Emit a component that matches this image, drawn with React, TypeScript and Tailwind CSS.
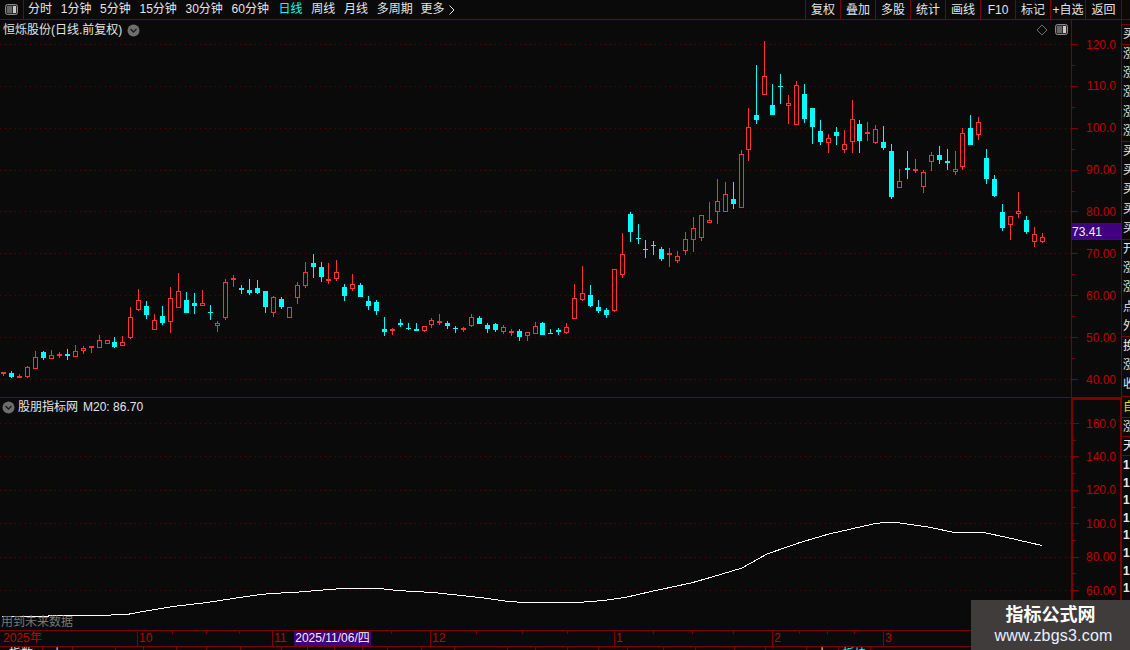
import React from "react";

type C = [number, number, number, number, number, "r" | "c"]; // x, hi, top, bot, lo, kind (zoom coords)
const block = (ox: number, oy: number, list: C[]) =>
  list.map(([x, hi, top, bot, lo, k]) => ({
    x: ox + Math.floor(x / 3),
    hi: oy + Math.round(hi / 3),
    top: oy + Math.round(top / 3),
    bot: oy + Math.round(bot / 3),
    lo: oy + Math.round(lo / 3),
    k,
  }));

const candles = [
  ...block(0, 250, [
    [9, 366, 366, 369, 378, "r"], [34, 363, 369, 381, 384, "c"], [57, 372, 378, 381, 381, "r"], [82, 348, 351, 381, 384, "r"],
    [106, 303, 321, 357, 357, "r"], [130, 303, 306, 324, 330, "c"], [154, 300, 316, 327, 327, "r"], [178, 306, 312, 318, 324, "r"],
    [202, 297, 312, 317, 330, "c"], [226, 285, 303, 321, 321, "r"], [250, 288, 294, 303, 312, "r"], [274, 288, 288, 294, 309, "r"],
    [298, 255, 270, 294, 294, "r"], [322, 270, 270, 282, 282, "r"], [344, 261, 276, 291, 294, "c"], [368, 258, 276, 288, 288, "r"],
    [392, 171, 201, 264, 267, "r"], [415, 117, 150, 180, 183, "r"], [439, 153, 168, 195, 207, "c"], [463, 192, 210, 240, 240, "r"],
    [487, 168, 198, 219, 225, "c"], [511, 111, 144, 216, 249, "r"], [535, 69, 123, 174, 174, "r"], [559, 126, 150, 189, 189, "c"],
    [583, 129, 159, 168, 192, "c"], [607, 120, 159, 168, 168, "r"], [631, 165, 186, 188, 210, "c"], [652, 213, 219, 228, 246, "r"],
    [676, 87, 96, 204, 210, "r"], [700, 75, 84, 87, 111, "r"], [724, 105, 114, 120, 132, "c"], [748, 87, 120, 129, 135, "c"],
    [772, 90, 114, 129, 132, "c"], [796, 123, 123, 171, 189, "c"], [820, 138, 141, 189, 201, "r"], [844, 141, 147, 171, 177, "c"],
    [868, 171, 171, 204, 204, "r"], [892, 96, 105, 144, 162, "r"],
  ]),
  ...block(300, 240, [
    [16, 66, 96, 138, 144, "r"], [40, 42, 69, 81, 114, "c"], [64, 66, 81, 111, 126, "c"], [85, 69, 117, 123, 132, "r"],
    [109, 60, 96, 117, 123, "r"], [133, 132, 141, 168, 183, "c"], [157, 102, 132, 147, 153, "r"], [181, 129, 135, 171, 171, "c"],
    [205, 168, 183, 198, 210, "c"], [229, 180, 186, 213, 225, "c"], [253, 231, 267, 276, 288, "c"], [277, 264, 267, 273, 285, "r"],
    [301, 237, 249, 255, 261, "c"], [325, 249, 264, 267, 270, "c"], [349, 249, 267, 273, 273, "c"], [373, 258, 258, 273, 276, "r"],
    [394, 234, 240, 255, 264, "r"], [418, 222, 243, 249, 255, "r"], [442, 243, 249, 258, 267, "c"], [466, 258, 264, 266, 279, "c"],
    [490, 261, 264, 267, 276, "r"], [514, 222, 231, 258, 261, "r"], [538, 228, 234, 252, 252, "c"], [562, 249, 255, 267, 279, "c"],
    [586, 249, 252, 270, 276, "c"], [610, 255, 261, 276, 282, "r"], [634, 267, 273, 279, 288, "r"], [658, 267, 273, 291, 303, "c"],
    [682, 276, 276, 288, 303, "r"], [706, 246, 258, 282, 282, "r"], [727, 246, 249, 285, 285, "c"], [751, 267, 279, 282, 282, "c"],
    [775, 264, 270, 276, 285, "c"], [799, 249, 261, 279, 282, "r"], [823, 132, 174, 237, 237, "r"], [847, 78, 159, 180, 183, "r"],
    [871, 135, 165, 198, 201, "c"], [895, 180, 201, 213, 219, "c"],
  ]),
  ...block(560, 130, [
    [139, 534, 540, 555, 564, "c"], [163, 417, 417, 543, 546, "r"], [187, 309, 372, 435, 444, "r"], [211, 246, 252, 306, 336, "c"],
    [235, 282, 324, 327, 342, "c"], [256, 330, 357, 359, 384, "c"], [280, 333, 345, 347, 375, "c"], [304, 351, 357, 387, 393, "c"],
    [328, 354, 369, 372, 411, "r"], [352, 363, 378, 393, 399, "r"], [376, 306, 327, 363, 375, "r"], [400, 261, 294, 330, 366, "r"],
    [424, 255, 255, 324, 333, "r"], [448, 216, 270, 279, 279, "r"], [472, 147, 213, 246, 282, "r"], [496, 156, 192, 246, 246, "r"],
    [520, 156, 207, 222, 237, "c"], [544, 60, 72, 234, 234, "r"],
  ]),
  ...block(740, 30, [
    [25, 234, 291, 360, 393, "r"], [49, 105, 255, 270, 282, "c"], [73, 33, 138, 195, 195, "r"], [97, 162, 225, 255, 255, "c"],
    [121, 132, 168, 171, 222, "c"], [145, 195, 219, 228, 282, "r"], [169, 153, 165, 285, 285, "r"], [193, 162, 192, 267, 279, "c"],
    [217, 234, 234, 291, 342, "c"], [241, 270, 303, 336, 345, "c"], [265, 312, 324, 339, 369, "r"], [289, 291, 306, 318, 345, "c"],
    [313, 300, 342, 360, 369, "r"], [337, 210, 267, 336, 369, "r"], [358, 270, 282, 333, 369, "c"], [382, 276, 306, 312, 333, "r"],
    [406, 285, 297, 339, 342, "r"], [430, 288, 336, 354, 360, "c"], [454, 342, 363, 501, 507, "c"], [478, 417, 454, 474, 474, "r"],
    [502, 363, 414, 420, 447, "c"], [526, 387, 417, 423, 429, "r"], [550, 420, 426, 471, 489, "r"], [574, 366, 375, 396, 423, "r"],
    [598, 348, 375, 390, 402, "c"], [622, 357, 393, 399, 420, "c"], [646, 363, 417, 426, 435, "r"], [667, 294, 309, 411, 420, "r"],
    [691, 255, 294, 345, 345, "c"], [715, 261, 276, 315, 330, "r"], [739, 357, 384, 447, 462, "c"], [763, 435, 447, 498, 501, "c"],
    [787, 522, 546, 594, 603, "c"], [811, 558, 558, 585, 630, "r"], [835, 486, 543, 552, 564, "r"], [859, 558, 570, 606, 612, "c"],
    [883, 591, 612, 636, 651, "r"], [907, 609, 621, 636, 639, "r"],
  ]),
];

const RED = "#ff3232";
const CYAN = "#00ffff";

const ma =
  "2,616.5 95,615.5 127,614.5 140,612 173,606.5 207,602.5 233,598.5 253,595.5 270,593.5 293,592.5 317,590.5 343,588.5 380,588.5 397,590.5 433,592.5 480,597.5 509,601.5 524,602.5 578,602.5 604,600.5 625,597.5 651,591.5 691,583 712,577 742,568 767,554 800,542.5 829,534 873,524 884,522.5 896,522.5 931,527.5 954,532.5 984,532.5 1007,537.5 1042,545.5";

const upperGrid = [44.5, 86.5, 128.5, 170.5, 211.5, 253.5, 295.5, 337.5, 379.5];
const lowerGrid = [423.5, 456.5, 490.5, 523.5, 557.5, 590.5];

const PanelIcon = () => (
  <svg width="13" height="11" viewBox="0 0 13 11" className="block">
    <rect x="0.5" y="0.5" width="12" height="10" rx="2" fill="#2b2b2b" stroke="#8a8a8a" />
    <rect x="8" y="2" width="3" height="7" fill="#c8c8c8" />
    <rect x="2" y="2" width="5" height="7" fill="#666666" />
  </svg>
);

const ChevronCircle = () => (
  <svg width="13" height="13" viewBox="0 0 13 13" className="block shrink-0">
    <circle cx="6.5" cy="6.5" r="6" fill="#6e6e6e" />
    <path d="M3.5 5 L6.5 8 L9.5 5" stroke="#1c1c1c" strokeWidth="1.4" fill="none" />
  </svg>
);

const tabs = ["分时", "1分钟", "5分钟", "15分钟", "30分钟", "60分钟", "日线", "周线", "月线", "多周期"];
const buttons = ["复权", "叠加", "多股", "统计", "画线", "F10", "标记", "+自选"];

const TopBar = () => (
  <div className="flex h-[20px] shrink-0 items-stretch border-b border-[#800000] text-[12px] leading-[21px] text-[#e4e4e4]">
    <div className="flex w-[24px] items-center justify-center border-r border-[#800000]">
      <PanelIcon />
    </div>
    <div className="ml-[4px] flex w-[440px] items-center gap-[8.7px]">
      {tabs.map((t) => (
        <span key={t} className={t === "日线" ? "ml-[1px] text-[#00ffff]" : ""}>
          {t}
        </span>
      ))}
      <span className="-ml-[1px] flex items-center gap-[5px]">
        更多
        <svg width="6" height="10" viewBox="0 0 6 10">
          <path d="M0.5 0.5 L5 5 L0.5 9.5" stroke="#e4e4e4" fill="none" />
        </svg>
      </span>
    </div>
    <div className="flex-1" />
    {buttons.map((b) => (
      <div key={b} className="w-[35px] border-l border-[#800000] text-center">
        {b}
      </div>
    ))}
    <div className="w-[37px] border-l border-r border-[#800000] text-center">返回</div>
    <div className="w-[8px]" />
  </div>
);

const Candle = ({ c }: { c: (typeof candles)[number] }) => {
  const wx = c.x + 0.5;
  const color = c.k === "r" ? RED : CYAN;
  if (c.k === "c") {
    return (
      <g>
        <line x1={wx} x2={wx} y1={c.hi} y2={c.lo} stroke={color} />
        <rect x={c.x - 2} y={c.top} width={5} height={Math.max(1, c.bot - c.top)} fill={color} />
      </g>
    );
  }
  return (
    <g>
      <line x1={wx} x2={wx} y1={c.hi} y2={c.top} stroke={color} />
      <line x1={wx} x2={wx} y1={c.bot} y2={c.lo} stroke={color} />
      <rect x={c.x - 1.5} y={c.top + 0.5} width={4} height={Math.max(1, c.bot - c.top - 1)} fill="#0a0a0a" stroke={color} />
    </g>
  );
};

const AxisTicks = ({ majors, h, y0 }: { majors: number[]; h: number; y0: number }) => {
  const step = majors[1] - majors[0];
  const mins = majors.map((m) => m + step / 2);
  return (
    <svg width="50" height={h} viewBox={`0 ${y0} 50 ${h}`} className="absolute left-0 top-0" shapeRendering="crispEdges">
      {majors.map((m) => (
        <line key={m} x1="0" x2="6" y1={m} y2={m} stroke="#800000" />
      ))}
      {mins.map((m) => (
        <line key={m} x1="0" x2="3" y1={m} y2={m} stroke="#800000" />
      ))}
    </svg>
  );
};

const UpperPane = () => (
  <div className="flex h-[378px] shrink-0 border-b border-[#800000]">
    <div className="relative w-[1071px] shrink-0">
      <svg width="1071" height="377" viewBox="0 20 1071 377" className="block">
        <g shapeRendering="crispEdges">
          {upperGrid.map((y) => (
            <line key={y} x1="0" x2="1071" y1={y} y2={y} stroke="#700000" strokeDasharray="1 4" />
          ))}
          {candles.map((c, i) => (
            <Candle key={i} c={c} />
          ))}
        </g>
        <path d="M1042 25 L1047 30 L1042 35 L1037 30 Z" stroke="#6e6e6e" fill="none" />
      </svg>
      <div className="absolute left-[3px] top-[1px] flex items-center gap-[5px] text-[12px] leading-[18px] text-[#e4e4e4]">
        <span>恒烁股份(日线.前复权)</span>
        <ChevronCircle />
      </div>
      <div className="absolute right-[3px] top-[4px]">
        <PanelIcon />
      </div>
    </div>
    <div className="relative w-[51px] shrink-0 border-l border-r border-[#800000] pt-[3.6px]">
      <AxisTicks majors={[44.5, 86.5, 128.5, 170.5, 211.5, 253.5, 295.5, 337.5, 379.5]} h={377} y0={20} />
      {["120.0", "110.0", "100.0", "90.00", "80.00", "70.00", "60.00", "50.00", "40.00"].map((v) => (
        <div key={v} className="flex h-[41.875px] items-center justify-end pr-[5px] text-[12px] text-[#c00000]">
          {v}
        </div>
      ))}
      <div className="absolute left-0 right-0 top-[203px] flex h-[17px] items-center border-y border-[#800000] bg-[#400080] text-[12px] text-[#f0f0f0]">
        73.41
      </div>
    </div>
  </div>
);

const LowerPane = () => (
  <div className="flex h-[232px] shrink-0">
    <div className="relative w-[1071px] shrink-0">
      <svg width="1071" height="232" viewBox="0 398 1071 232" className="block">
        <g shapeRendering="crispEdges">
          {lowerGrid.map((y) => (
            <line key={y} x1="0" x2="1071" y1={y} y2={y} stroke="#700000" strokeDasharray="1 4" />
          ))}
          <polyline points={ma} fill="none" stroke="#ffffff" />
        </g>
      </svg>
      <div className="absolute left-[2px] top-[1px] flex items-center gap-[3px] text-[12px] leading-[16px] text-[#e4e4e4]">
        <ChevronCircle />
        <span>股朋指标网</span>
        <span className="ml-[2px]">M20: 86.70</span>
      </div>
      <div className="absolute bottom-0 left-[1px] text-[12px] leading-[15px] text-[#787878]">用到未来数据</div>
    </div>
    <div className="relative w-[51px] shrink-0 border-x-2 border-t-2 border-[#800000] pt-[7px]">
      <AxisTicks majors={[23.5, 56.9, 90.3, 123.7, 157.1, 190.5]} h={230} y0={0} />
      {["160.0", "140.0", "120.0", "100.0", "80.00", "60.00"].map((v) => (
        <div key={v} className="flex h-[33.4px] items-center justify-end pr-[4px] text-[12px] text-[#c00000]">
          {v}
        </div>
      ))}
    </div>
  </div>
);

const segments: [string, number][] = [
  ["2025年", 137],
  ["10", 135],
  ["11", 158],
  ["12", 184],
  ["1", 158],
  ["2", 111],
  ["3", 239],
];
const timeTicks = [172, 206, 239, 391, 476, 522, 567, 653, 692, 733, 799, 827, 854];

const TimeAxis = () => (
  <div className="relative flex h-[16px] shrink-0 border-t border-[#800000] text-[12px] leading-[15px] text-[#c00000]">
    {segments.map(([t, w], i) => (
      <div
        key={t}
        className={i === 0 ? "pl-[3px]" : "border-l border-[#800000] pl-[1px]"}
        style={{ width: w }}
      >
        {t}
      </div>
    ))}
    <svg width="1122" height="3" className="absolute left-0 top-0" shapeRendering="crispEdges">
      {timeTicks.map((x) => (
        <line key={x} x1={x + 0.5} x2={x + 0.5} y1="0" y2="3" stroke="#800000" />
      ))}
    </svg>
    <div className="absolute left-[294px] top-0 h-[15px] w-[77px] bg-[#400080] text-center text-[12px] leading-[15px] text-[#f0f0f0]">
      2025/11/06/四
    </div>
  </div>
);

const bottomStops = [0, 43, 73, 116, 144, 177, 207, 241, 282, 308, 335, 363, 388, 422, 455, 508, 536, 568, 599, 628, 664, 696, 735, 766, 807, 839, 871, 1122];
const bottomText: Record<number, string> = { 0: "指数", 1: "上", 24: "上", 25: "板块" };

const StatusStrip = () => (
  <div className="flex h-[4px] shrink-0 overflow-hidden border-t border-[#800000] text-[12px] leading-[12px] text-[#e4e4e4]">
    {bottomStops.slice(1).map((x, i) => (
      <div
        key={x}
        className={`overflow-hidden border-r border-[#800000] pt-[1px] text-center ${i === 25 ? "text-[#00ffff]" : ""}`}
        style={{ width: x - bottomStops[i] }}
      >
        {bottomText[i] ?? ""}
      </div>
    ))}
  </div>
);

const Row = ({ t, h, yellow, bold }: { t: string; h: string; yellow?: boolean; bold?: boolean }) => (
  <div className={`${h} overflow-hidden pl-[1px] text-[12px] ${yellow ? "text-[#e0e000]" : "text-[#e8e8e8]"} ${bold ? "font-bold" : ""}`}>{t}</div>
);

const Group = ({ list, className }: { list: string[]; className?: string }) => (
  <div className={`shrink-0 border-b border-[#800000] ${className ?? ""}`}>
    {list.map((t, i) => (
      <Row key={i} t={t} h="h-[19.2px] leading-[19px]" />
    ))}
  </div>
);

const Sidebar = () => (
  <div className="flex w-[8px] shrink-0 flex-col overflow-hidden leading-none">
    <div className="h-[5px] shrink-0 border-b border-[#800000]" />
    <Group list={["买"]} className="h-[20px]" />
    <Group list={["涨", "涨", "涨", "涨", "涨"]} className="h-[97px]" />
    <Group list={["买", "买", "买", "买", "买"]} className="h-[98px]" />
    <Group list={["开", "涨", "涨", "点", "外"]} className="h-[97px]" />
    <Group list={["换", "涨", "收"]} className="h-[60px]" />
    <div className="mt-[1px] h-[20px] shrink-0 border-b border-[#800000]">
      <Row t="自" h="h-[19px] leading-[19px]" yellow />
    </div>
    <Group list={["涨"]} className="h-[19px]" />
    <Group list={["天"]} className="h-[19px]" />
    {["1", "1", "1", "1", "1", "1", "1", "1", "1"].map((t, i) => (
      <Row key={i} t={t} h="h-[17.6px] leading-[18px] shrink-0" bold />
    ))}
  </div>
);

export default function App() {
  return (
    <div
      className="relative flex h-[650px] w-[1130px] flex-col overflow-hidden bg-[#0a0a0a]"
      style={{ fontFamily: '"Liberation Sans", "Noto Sans CJK SC", sans-serif' }}
    >
      <TopBar />
      <div className="flex min-h-0 flex-1">
        <div className="flex w-[1122px] shrink-0 flex-col">
          <UpperPane />
          <LowerPane />
          <TimeAxis />
          <StatusStrip />
        </div>
        <Sidebar />
      </div>
      <div className="absolute bottom-0 right-0 flex h-[50px] w-[159px] flex-col items-center bg-[#413c3c]">
        <div className="mt-[4px] text-[18px] font-bold leading-[22px] text-white">指标公式网</div>
        <div className="ml-[6px] text-[16px] leading-[19px] tracking-[0.2px] text-[#e8f0ff]">www.zbgs3.com</div>
      </div>
    </div>
  );
}
